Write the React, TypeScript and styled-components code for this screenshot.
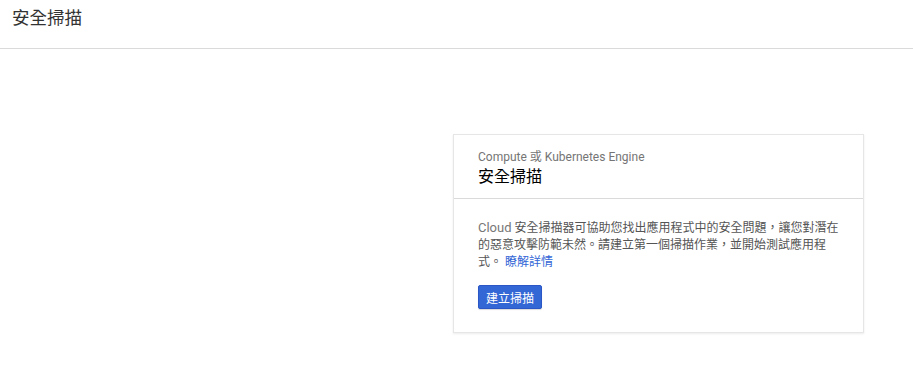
import styled, { createGlobalStyle } from "styled-components";

const GlobalStyle = createGlobalStyle`
  html, body {
    margin: 0;
    padding: 0;
    background: #fff;
    font-family: Roboto, "Noto Sans CJK TC", sans-serif;
  }
`

const App = () => {
    return (
        <Page>
            <GlobalStyle />
            <Header>
                <PageTitle>安全掃描</PageTitle>
            </Header>
            <Main>
                <Card>
                    <CardHead>
                        <Sub>Compute 或 Kubernetes Engine</Sub>
                        <CardTitle>安全掃描</CardTitle>
                    </CardHead>
                    <CardBody>
                        <Text>
                            <Latin>Cloud</Latin> 安全掃描器可協助您找出應用程式中的安全問題，讓您對潛在的惡意攻擊防範未然。請建立第一個掃描作業，並開始測試應用程式。 <Link href="#">瞭解詳情</Link>
                        </Text>
                        <Button>建立掃描</Button>
                    </CardBody>
                </Card>
            </Main>
        </Page>
    )
}

export default App;

const Page = styled.div`
    width: 100%;
    min-height: 390px;
`

const Header = styled.div`
    display: flex;
    align-items: center;
    height: 49px;
    padding: 0 12px;
    border-bottom: 1px solid #dadada;
    box-sizing: border-box;
`

const PageTitle = styled.div`
    font-size: 17.5px;
    line-height: 24px;
    color: #333;
    margin-top: -12px;
`

const Main = styled.div`
    display: flex;
    padding: 85px 0 0 453px;
`

const Card = styled.div`
    width: 411px;
    box-sizing: border-box;
    background: #fff;
    border: 1px solid #e6e6e6;
    box-shadow: 0 1px 2px rgba(0, 0, 0, 0.08);
`

const CardHead = styled.div`
    display: flex;
    flex-direction: column;
    padding: 14px 24px 9px;
    border-bottom: 1px solid #dadada;
`

const Sub = styled.div`
    font-size: 12px;
    line-height: 16px;
    color: #757575;
`

const CardTitle = styled.div`
    font-size: 16px;
    line-height: 24px;
    color: #000;
`

const CardBody = styled.div`
    display: flex;
    flex-direction: column;
    align-items: flex-start;
    padding: 20px 24px 23px;
`

const Text = styled.div`
    width: 363px;
    font-size: 12px;
    line-height: 17px;
    color: #555;
    margin-bottom: 14px;
`

const Latin = styled.span`
    font-size: 13px;
    color: #777;
`

const Link = styled.a`
    color: #3367d6;
    text-decoration: none;
`

const Button = styled.button`
    height: 24px;
    padding: 0 7px;
    font-family: Roboto, "Noto Sans CJK TC", sans-serif;
    font-size: 12px;
    color: #fff;
    background: #3367d6;
    border: 1px solid #2a56c6;
    border-radius: 2px;
    box-shadow: 0 1px 1px rgba(0, 0, 0, 0.15);
`
